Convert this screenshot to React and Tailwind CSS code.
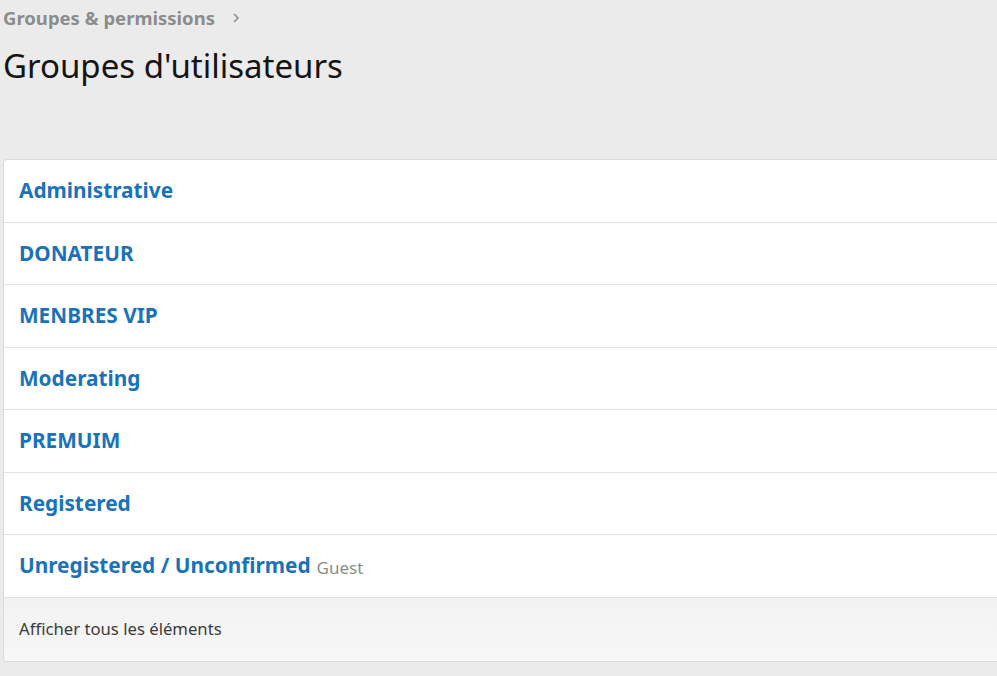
import React from "react";

const groups = [
  { name: "Administrative" },
  { name: "DONATEUR" },
  { name: "MENBRES VIP" },
  { name: "Moderating" },
  { name: "PREMUIM" },
  { name: "Registered" },
  { name: "Unregistered / Unconfirmed", hint: "Guest" },
];

export default function App() {
  return (
    <div
      className="min-h-screen bg-[#ebebeb] pl-[3px] pt-[6px] overflow-hidden"
      style={{ fontFamily: '"Noto Sans", "Open Sans", sans-serif' }}
    >
      <div className="flex items-center gap-[14px] text-[18.5px] font-bold text-[#8c8c8c] leading-[24px]">
        <span>Groupes &amp; permissions</span>
        <svg width="14" height="14" viewBox="0 0 14 14" fill="none" stroke="#8c8c8c" strokeWidth="1.5">
          <path d="M5 3l4 4-4 4" />
        </svg>
      </div>
      <h1 className="mt-[14px] text-[33px] leading-[44px] text-[#141414] font-normal">
        Groupes d'utilisateurs
      </h1>

      <div className="mt-[71px] w-[1010px] bg-white border border-[#dadada] rounded-[4px] overflow-hidden">
        {groups.map((g) => (
          <div
            key={g.name}
            className="h-[62.5px] flex items-center px-[15px] border-b border-[#e2e2e2]"
          >
            <span className="text-[20.8px] font-bold text-[#1a72b8]">{g.name}</span>
            {g.hint && <span className="ml-[6px] text-[17px] text-[#8c8c8c] mt-[3px]">{g.hint}</span>}
          </div>
        ))}
        <div className="h-[63px] flex items-center px-[15px] bg-gradient-to-b from-[#f2f2f2] to-[#f7f7f7] text-[16.7px] text-[#3c3c3c]">
          Afficher tous les éléments
        </div>
      </div>
    </div>
  );
}
